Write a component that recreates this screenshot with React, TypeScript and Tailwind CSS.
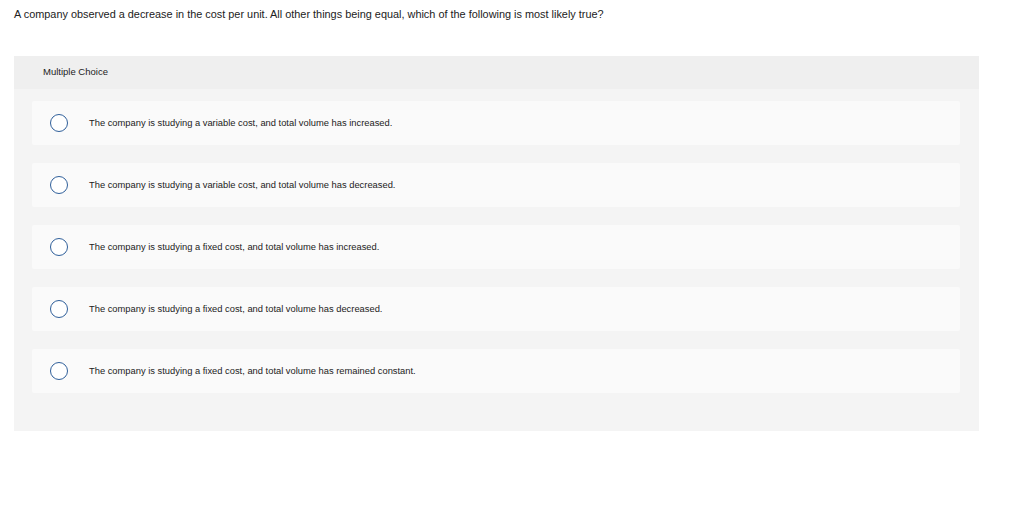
import React from "react";

const options = [
  "The company is studying a variable cost, and total volume has increased.",
  "The company is studying a variable cost, and total volume has decreased.",
  "The company is studying a fixed cost, and total volume has increased.",
  "The company is studying a fixed cost, and total volume has decreased.",
  "The company is studying a fixed cost, and total volume has remained constant.",
];

export default function App() {
  return (
    <div className="w-[1024px] h-[527px] bg-white text-[#222] font-['Liberation_Sans',Arial,sans-serif]">
      <div className="pt-[8px] pl-[14px] text-[10.9px] leading-[13px]">
        A company observed a decrease in the cost per unit. All other things being equal, which of the following is most likely true?
      </div>
      <div className="ml-[14px] mt-[35px] w-[965px] bg-[#f4f4f4]">
        <div className="h-[33px] bg-[#efefef] pl-[29px] flex items-center text-[9.5px] text-[#222]">
          Multiple Choice
        </div>
        <div className="pt-[12px] pb-[38px] pl-[18px] pr-[19px] flex flex-col gap-[18px]">
          {options.map((o) => (
            <div key={o} className="h-[44px] bg-[#fafafa] rounded-[2px] flex items-center">
              <div className="ml-[18px] w-[18px] h-[18px] rounded-full border border-[#2f5f9a] bg-white shrink-0" />
              <div className="ml-[21px] text-[9.35px] text-[#222]">{o}</div>
            </div>
          ))}
        </div>
      </div>
    </div>
  );
}
